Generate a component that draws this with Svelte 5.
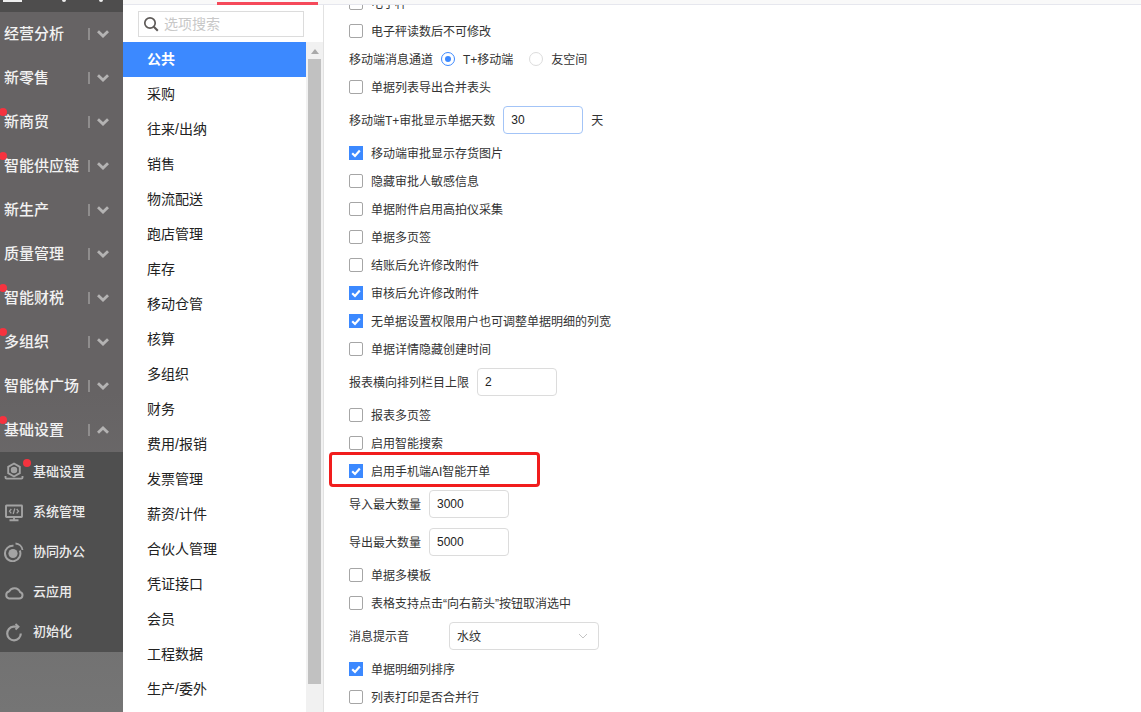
<script>
	const groups = [
		{ name: '经营分析' },
		{ name: '新零售' },
		{ name: '新商贸', dot: true },
		{ name: '智能供应链', dot: true },
		{ name: '新生产' },
		{ name: '质量管理' },
		{ name: '智能财税', dot: true },
		{ name: '多组织', dot: true },
		{ name: '智能体广场' },
		{ name: '基础设置', dot: true, open: true }
	];
	const subs = [
		{ name: '基础设置', icon: 'gear', dot: true },
		{ name: '系统管理', icon: 'monitor' },
		{ name: '协同办公', icon: 'orbit' },
		{ name: '云应用', icon: 'cloud' },
		{ name: '初始化', icon: 'reset' }
	];
	const categories = [
		'公共', '采购', '往来/出纳', '销售', '物流配送', '跑店管理', '库存', '移动仓管', '核算',
		'多组织', '财务', '费用/报销', '发票管理', '薪资/计件', '合伙人管理', '凭证接口', '会员',
		'工程数据', '生产/委外'
	];
	const active = '公共';
</script>

{#snippet check(label, checked = false)}
	<label class="row check">
		<span class="box" class:checked>
			{#if checked}
				<svg viewBox="0 0 14 14" width="14" height="14"><path d="M3.2 7.2 6 10l4.8-5.4" fill="none" stroke="#fff" stroke-width="2.2" /></svg>
			{/if}
		</span>
		<span class="t">{label}</span>
	</label>
{/snippet}

{#snippet field(label, value, focused = false, suffix = '')}
	<div class="row field">
		<span class="t">{label}</span>
		<span class="input" class:focused>{value}</span>
		{#if suffix}<span class="t">{suffix}</span>{/if}
	</div>
{/snippet}

<div class="page">
	<aside class="sidebar">
		<div class="topstrip">
			<i class="stub a"></i><i class="stub b"></i><i class="stub c"></i>
		</div>
		{#each groups as g}
			<div class="group">
				{#if g.dot}<i class="dot"></i>{/if}
				<span class="group-name">{g.name}</span>
				<span class="divider"></span>
				<svg class="chev" viewBox="0 0 12 8" width="12" height="8">
					<path d={g.open ? 'M1 6.800 6 2l5 4.800' : 'M1 1.200 6 6l5-4.800'} fill="none" stroke="#b4b3b3" stroke-width="2.800" />
				</svg>
			</div>
		{/each}
		<div class="subs">
			{#each subs as s}
				<div class="sub">
					<svg class="sub-icon" viewBox="0 0 20 20" width="20" height="20" fill="none" stroke="#a3a3a3" stroke-width="1.900">
						{#if s.icon === 'gear'}
							<path d="M10 1.500 15.800 4.800v6.400L10 14.500 4.200 11.200V4.800z" />
							<circle cx="10" cy="8" r="2.300" fill="#a3a3a3" />
							<path d="M1.500 14v1.600a1 1 0 0 0 1 1h15a1 1 0 0 0 1-1V14" />
						{:else if s.icon === 'monitor'}
							<rect x="2" y="3.500" width="16" height="11.500" rx="0.500" />
							<path d="M5.500 18.200h9M10 15v3" />
							<path d="M7.300 7 5.500 9.200l1.800 2.200M12.700 7l1.800 2.200-1.800 2.200M10.800 6.500 9.200 12" stroke-width="1.300" />
						{:else if s.icon === 'orbit'}
							<circle cx="9" cy="11.500" r="4.600" fill="#a3a3a3" stroke="none" />
							<path d="M15.800 8.500A7.700 7.700 0 1 1 9.500 3.800" stroke-width="2" />
							<path d="M11.500 1.500a7.500 7.500 0 0 1 7 6.500" stroke-width="1.800" />
						{:else if s.icon === 'cloud'}
							<path d="M5 16.500h10.200a3.300 3.300 0 0 0 .8-6.500A6 6 0 0 0 5 9.500a3.600 3.600 0 0 0 0 7z" stroke-width="2" />
						{:else}
							<path d="M16.800 11.500a6.800 6.800 0 1 1-7.300-6.800h4" stroke-width="2.200" />
							<path d="M11.500 2 14.500 4.700 11.500 7.500" stroke-width="1.900" />
						{/if}
					</svg>
					<span class="sub-name">{s.name}{#if s.dot}<i class="subdot"></i>{/if}</span>
				</div>
			{/each}
		</div>
	</aside>

	<div class="main">
		<header class="tabs"><i class="tab-red"></i></header>
		<div class="body">
			<section class="nav">
				<div class="search">
					<svg viewBox="0 0 16 16" width="16" height="16" fill="none" stroke="#5e5a58" stroke-width="1.700">
						<circle cx="7" cy="7" r="5.200" /><path d="m10.800 10.800 4 4" stroke-width="2" />
					</svg>
					<span>选项搜索</span>
				</div>
				<div class="nav-list">
					<ul>
						{#each categories as c}
							<li class:active={c === active}>{c}</li>
						{/each}
					</ul>
					<div class="scrollbar">
						<svg viewBox="0 0 8 5" width="8" height="5"><path d="M0 5 4 0l4 5z" fill="#a9a9a9" /></svg>
						<div class="thumb"></div>
					</div>
				</div>
			</section>

			<section class="form">
				<div class="scroller">
					{@render check('电子秤')}
					{@render check('电子秤读数后不可修改')}
					<div class="row radios">
						<span class="t">移动端消息通道</span>
						<span class="radio on"></span><span class="t radio-text">T+移动端</span>
						<span class="radio"></span><span class="t radio-text">友空间</span>
					</div>
					{@render check('单据列表导出合并表头')}
					{@render field('移动端T+审批显示单据天数', '30', true, '天')}
					{@render check('移动端审批显示存货图片', true)}
					{@render check('隐藏审批人敏感信息')}
					{@render check('单据附件启用高拍仪采集')}
					{@render check('单据多页签')}
					{@render check('结账后允许修改附件')}
					{@render check('审核后允许修改附件', true)}
					{@render check('无单据设置权限用户也可调整单据明细的列宽', true)}
					{@render check('单据详情隐藏创建时间')}
					{@render field('报表横向排列栏目上限', '2')}
					{@render check('报表多页签')}
					{@render check('启用智能搜索')}
					<div class="marked">
						{@render check('启用手机端AI智能开单', true)}
						<i class="redbox"></i>
					</div>
					{@render field('导入最大数量', '3000')}
					{@render field('导出最大数量', '5000')}
					{@render check('单据多模板')}
					{@render check('表格支持点击“向右箭头”按钮取消选中')}
					<div class="row field">
						<span class="t sound-label">消息提示音</span>
						<span class="select">
							<span class="t">水纹</span>
							<svg viewBox="0 0 10 6" width="10" height="6"><path d="m1 1 4 4 4-4" fill="none" stroke="#c4c4c4" /></svg>
						</span>
					</div>
					{@render check('单据明细列排序', true)}
					{@render check('列表打印是否合并行')}
				</div>
			</section>
		</div>
	</div>
</div>

<style>
	:global(body) {
		margin: 0;
		background: #fff;
	}

	.page {
		display: flex;
		width: 1141px;
		height: 712px;
		overflow: hidden;
		font-family: "Liberation Sans", "Noto Sans CJK SC", sans-serif;
		color: #333;
	}

	.sidebar {
		flex: 0 0 123px;
		background: linear-gradient(180deg, #666364 0%, #666364 55%, #6f6e6e 80%, #757575 100%);
	}

	.topstrip {
		position: relative;
		height: 12px;
		background: #4e4d4d;
	}

	.stub {
		position: absolute;
		top: 0;
		height: 2px;
		background: #eee;
	}

	.stub.a { left: 3px; width: 19px; }
	.stub.b { left: 62px; width: 4px; border-radius: 0 0 2px 2px; }
	.stub.c { left: 99px; width: 4px; border-radius: 0 0 2px 2px; }

	.group {
		position: relative;
		display: flex;
		align-items: center;
		height: 44px;
		padding-left: 4px;
	}

	.group-name {
		flex: 0 0 84px;
		padding-bottom: 3px;
		font-size: 15px;
		font-weight: 500;
		color: #f2f2f2;
		white-space: nowrap;
	}

	.divider {
		width: 2px;
		height: 12px;
		background: #8f8d8d;
	}

	.chev {
		margin-left: 7px;
	}

	.dot {
		position: absolute;
		left: -1px;
		top: 8px;
		width: 8px;
		height: 8px;
		border-radius: 50%;
		background: #f5333f;
	}

	.subs {
		background: #4f4f4f;
	}

	.sub {
		display: flex;
		align-items: center;
		height: 40px;
		padding-left: 4px;
		gap: 9px;
	}

	.sub-icon {
		flex: none;
	}

	.sub-name {
		position: relative;
		padding-bottom: 3px;
		font-size: 13px;
		font-weight: 500;
		color: #ececec;
	}

	.subdot {
		position: absolute;
		left: -10px;
		top: -2px;
		width: 8px;
		height: 8px;
		border-radius: 50%;
		background: #f5333f;
	}

	.main {
		flex: 1;
		min-width: 0;
		display: flex;
		flex-direction: column;
	}

	.tabs {
		position: relative;
		flex: 0 0 5px;
		box-sizing: border-box;
		background: #f9f9f9;
		border-bottom: 1px solid #e6e7ee;
	}

	.tab-red {
		position: absolute;
		left: 94px;
		top: 2px;
		width: 101px;
		height: 3px;
		background: #f5495a;
	}

	.body {
		flex: 1;
		min-height: 0;
		display: flex;
	}

	.nav {
		flex: 0 0 200px;
		display: flex;
		flex-direction: column;
		border-right: 1px solid #e2e2e2;
		background: #fff;
	}

	.search {
		display: flex;
		align-items: center;
		gap: 5px;
		box-sizing: border-box;
		width: 166px;
		height: 26px;
		margin: 6px 0 5px 15px;
		padding: 0 0 0 4px;
		border: 1px solid #dcdcdc;
		font-size: 14px;
		color: #c8c8c8;
	}

	.search span {
		padding-bottom: 2px;
	}

	.nav-list {
		flex: 1;
		min-height: 0;
		display: flex;
	}

	ul {
		flex: 0 0 183px;
		margin: 0;
		padding: 0;
		list-style: none;
		overflow: hidden;
	}

	li {
		height: 35px;
		line-height: 34px;
		padding-left: 24px;
		font-size: 14px;
		color: #222;
		white-space: nowrap;
	}

	li.active {
		background: #3c89ff;
		color: #fff;
		font-weight: 700;
	}

	.scrollbar {
		flex: 1;
		display: flex;
		flex-direction: column;
		align-items: center;
		background: #f1f1f1;
		padding-top: 7px;
	}

	.thumb {
		width: 13px;
		height: 625px;
		margin-top: 5px;
		background: #c1c1c1;
	}

	.form {
		flex: 1;
		min-width: 0;
		overflow: hidden;
		padding-left: 25px;
	}

	.scroller {
		margin-top: -16px;
	}

	.row {
		display: flex;
		align-items: center;
		font-size: 12px;
		color: #333;
		white-space: nowrap;
	}

	.t {
		padding-bottom: 2px;
	}

	.check {
		height: 28px;
		gap: 8px;
	}

	.box {
		box-sizing: border-box;
		flex: none;
		width: 14px;
		height: 14px;
		border: 1px solid #a6a6a6;
		border-radius: 2px;
		background: #fff;
	}

	.box.checked {
		border: 0;
		border-radius: 0;
		background: #3c89ff;
	}

	.radios {
		height: 28px;
	}

	.radio {
		box-sizing: border-box;
		flex: none;
		position: relative;
		width: 14px;
		height: 14px;
		margin-left: 8px;
		border: 1px solid #dcdcdc;
		border-radius: 50%;
	}

	.radio.on {
		border-color: #3c89ff;
	}

	.radio.on::after {
		content: "";
		position: absolute;
		left: 3px;
		top: 3px;
		width: 6px;
		height: 6px;
		border-radius: 50%;
		background: #3c89ff;
	}

	.radio-text {
		margin-left: 8px;
		margin-right: 8px;
	}

	.field {
		height: 38px;
		gap: 8px;
	}

	.input {
		box-sizing: border-box;
		width: 80px;
		height: 28px;
		line-height: 26px;
		padding-left: 7px;
		border: 1px solid #dcdcdc;
		border-radius: 4px;
		font-size: 12px;
		color: #222;
	}

	.input.focused {
		border-color: #a3c4f7;
	}

	.sound-label {
		width: 92px;
	}

	.select {
		box-sizing: border-box;
		display: flex;
		align-items: center;
		justify-content: space-between;
		width: 150px;
		height: 28px;
		padding: 0 10px 0 7px;
		border: 1px solid #dcdcdc;
		border-radius: 4px;
	}

	.marked {
		position: relative;
	}

	.redbox {
		position: absolute;
		left: -20px;
		top: -5px;
		box-sizing: border-box;
		width: 211px;
		height: 35px;
		border: 3px solid #f11d1d;
		border-radius: 4px;
		pointer-events: none;
	}
</style>
